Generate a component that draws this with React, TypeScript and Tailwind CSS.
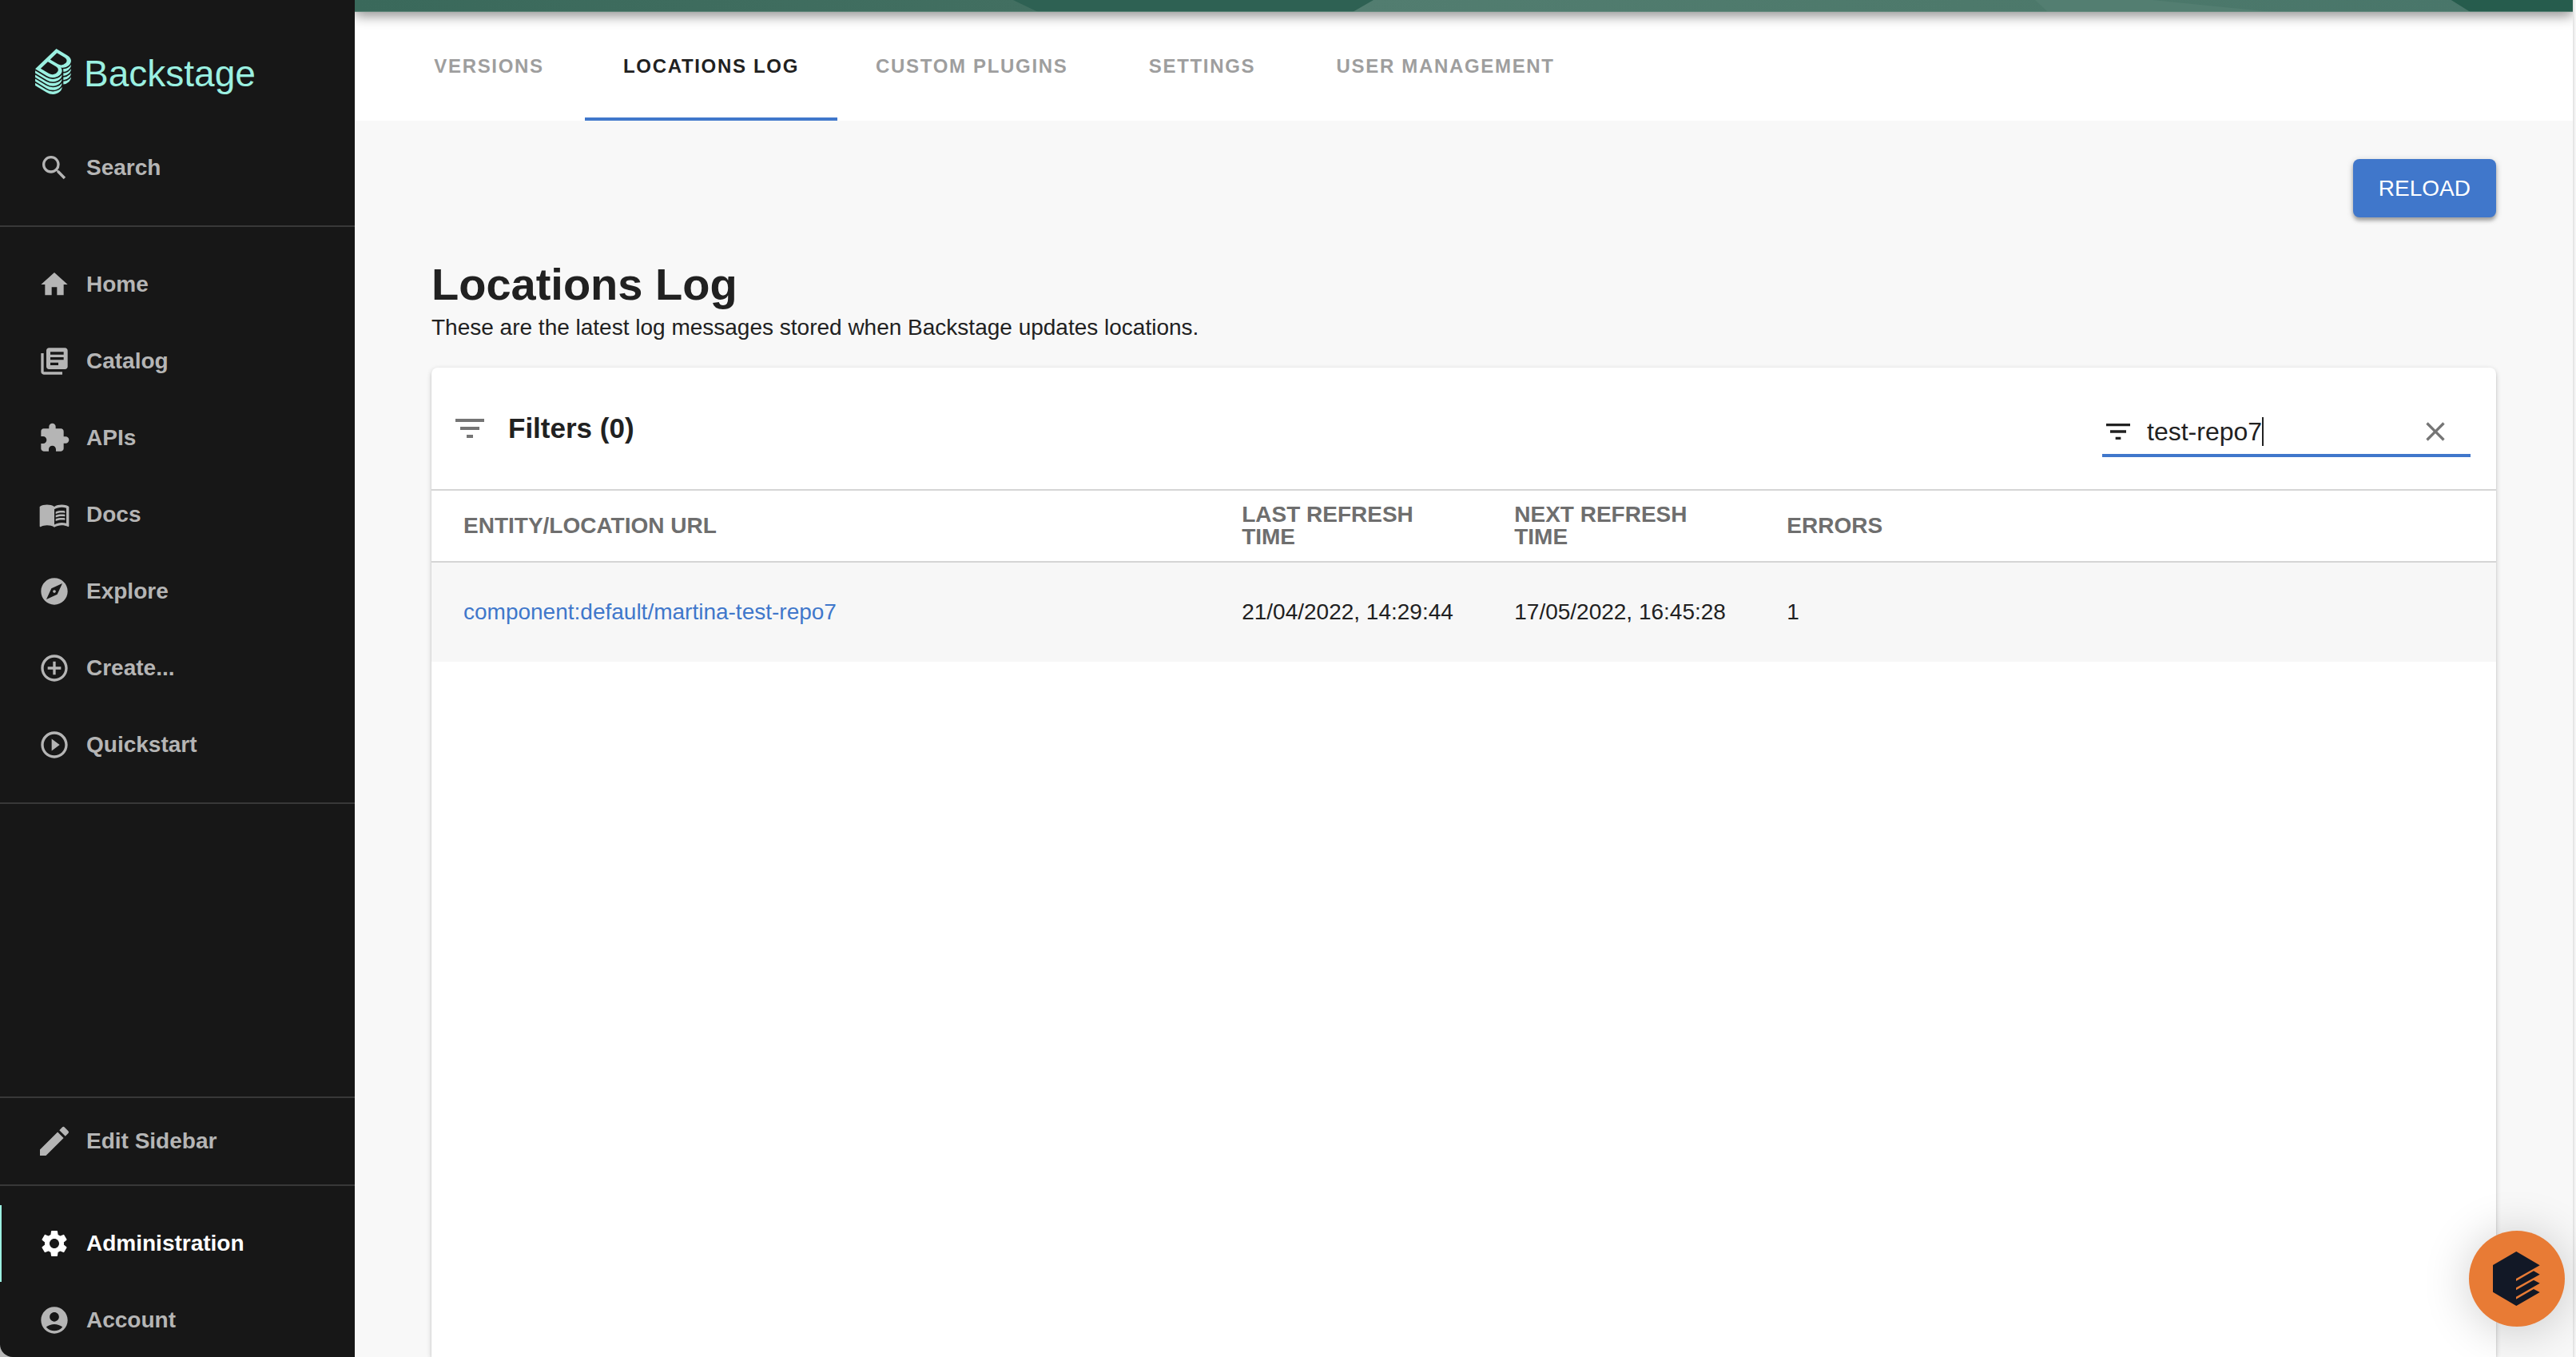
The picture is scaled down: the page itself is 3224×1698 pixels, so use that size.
import type { ReactNode } from "react";
import type { IconType } from "react-icons";
import {
  MdAccountCircle,
  MdAddCircleOutline,
  MdClear,
  MdEdit,
  MdExplore,
  MdExtension,
  MdFilterList,
  MdHome,
  MdLibraryBooks,
  MdMenuBook,
  MdPlayCircleOutline,
  MdSearch,
  MdSettings,
} from "react-icons/md";

const BACKSTAGE_MARK =
  "M303,166.05a80.69,80.69,0,0,0,13.45-10.37c.79-.77,1.55-1.53,2.3-2.3a83.12,83.12,0,0,0,7.93-9.38A63.69,63.69,0,0,0,333,133.23a48.58,48.58,0,0,0,4.35-16.4c1.49-19.39-10-38.67-35.62-54.22L198.56,0,78.3,115.23,0,190.25l108.6,65.91a111.59,111.59,0,0,0,57.76,16.41c24.92,0,48.8-8.8,66.42-25.69,19.16-18.36,25.52-42.12,13.7-61.87a49.22,49.22,0,0,0-6.8-8.87A89.17,89.17,0,0,0,259,178.29h.15a85.08,85.08,0,0,0,31-5.79A80.88,80.88,0,0,0,303,166.05ZM202.45,225.86c-19.32,18.51-50.4,21.23-75.7,5.9L51.61,186.15l67.45-64.64,76.41,46.38C223,184.58,221.49,207.61,202.45,225.86Zm8.93-82.22-70.65-42.89L205.14,39,274.51,81.1c25.94,15.72,29.31,37,10.55,55A60.69,60.69,0,0,1,211.38,143.64Zm29.86,190c-19.57,18.75-46.17,29.09-74.88,29.09a123.73,123.73,0,0,1-64.1-18.2L0,282.52v24.67L108.6,373.1a111.6,111.6,0,0,0,57.76,16.42c24.92,0,48.8-8.81,66.42-25.69,12.88-12.34,20-27.13,19.68-41.49v-1.79A87.27,87.27,0,0,1,241.24,333.68Zm0-39c-19.57,18.75-46.17,29.08-74.88,29.08a123.81,123.81,0,0,1-64.1-18.19L0,243.53v24.68l108.6,65.91a111.6,111.6,0,0,0,57.76,16.42c24.92,0,48.8-8.81,66.42-25.69,12.88-12.34,20-27.13,19.68-41.5v-1.78A87.27,87.27,0,0,1,241.24,294.7Zm0-39c-19.57,18.76-46.17,29.09-74.88,29.09a123.81,123.81,0,0,1-64.1-18.19L0,204.55v24.68l108.6,65.91a111.59,111.59,0,0,0,57.76,16.41c24.92,0,48.8-8.8,66.42-25.68,12.88-12.35,20-27.13,19.68-41.5v-1.82A86.09,86.09,0,0,1,241.24,255.71Zm83.7,25.74a94.15,94.15,0,0,1-60.2,25.86h0V334a81.6,81.6,0,0,0,51.74-22.37c14-13.38,21.14-28.11,21-42.64v-2.19A94.92,94.92,0,0,1,324.94,281.45Zm-83.7,91.21c-19.57,18.76-46.17,29.09-74.88,29.09a123.73,123.73,0,0,1-64.1-18.2L0,321.5v24.68l108.6,65.9a111.6,111.6,0,0,0,57.76,16.42c24.92,0,48.8-8.8,66.42-25.69,12.88-12.34,20-27.13,19.68-41.49v-1.79A86.29,86.29,0,0,1,241.24,372.66ZM327,162.45c-.68.69-1.35,1.38-2.05,2.06a94.37,94.37,0,0,1-10.64,8.65,91.35,91.35,0,0,1-11.6,7,94.53,94.53,0,0,1-26.24,8.71,97.69,97.69,0,0,1-14.16,1.57c.5,1.61.9,3.25,1.25,4.9a53.27,53.27,0,0,1,1.14,12V217h.05a84.41,84.41,0,0,0,25.35-5.55,81,81,0,0,0,26.39-16.82c.8-.77,1.5-1.56,2.26-2.34a82.08,82.08,0,0,0,7.93-9.38A63.76,63.76,0,0,0,333,172.17a48.55,48.55,0,0,0,4.32-16.45c.09-1.23.2-2.47.19-3.7V150q-1.08,1.54-2.25,3.09A96.73,96.73,0,0,1,327,162.45Zm0,77.92c-.69.7-1.31,1.41-2,2.1a94.2,94.2,0,0,1-60.2,25.86h0l0,26.67h0a81.6,81.6,0,0,0,51.74-22.37A73.51,73.51,0,0,0,333,250.13a48.56,48.56,0,0,0,4.32-16.44c.09-1.24.2-2.47.19-3.71v-2.19c-.74,1.07-1.46,2.15-2.27,3.21A95.68,95.68,0,0,1,327,240.37Zm0-39c-.69.7-1.31,1.41-2,2.1a93.18,93.18,0,0,1-10.63,8.65,91.63,91.63,0,0,1-11.63,7,95.47,95.47,0,0,1-37.94,10.18h0V256h0a81.65,81.65,0,0,0,51.74-22.37c.8-.77,1.5-1.56,2.26-2.34a82.08,82.08,0,0,0,7.93-9.38A63.76,63.76,0,0,0,333,211.15a48.56,48.56,0,0,0,4.32-16.44c.09-1.24.2-2.48.19-3.71v-2.2c-.74,1.08-1.46,2.16-2.27,3.22A95.68,95.68,0,0,1,327,201.39Z";

type NavItem = { label: string; icon: IconType; active?: boolean; large?: boolean };

const MAIN_NAV: NavItem[] = [
  { label: "Home", icon: MdHome },
  { label: "Catalog", icon: MdLibraryBooks },
  { label: "APIs", icon: MdExtension },
  { label: "Docs", icon: MdMenuBook },
  { label: "Explore", icon: MdExplore },
  { label: "Create...", icon: MdAddCircleOutline },
  { label: "Quickstart", icon: MdPlayCircleOutline },
];

const FOOTER_NAV: NavItem[] = [
  { label: "Administration", icon: MdSettings, active: true },
  { label: "Account", icon: MdAccountCircle },
];

const TABS = ["Versions", "Locations Log", "Custom Plugins", "Settings", "User Management"];

const ROWS = [
  {
    entity: "component:default/martina-test-repo7",
    last: "21/04/2022, 14:29:44",
    next: "17/05/2022, 16:45:28",
    errors: 1,
  },
];

function SidebarLink({ label, icon: Icon, active, large }: NavItem) {
  return (
    <a
      href="#"
      aria-current={active ? "page" : undefined}
      className={`relative flex h-24 shrink-0 items-center text-[28px] font-bold leading-[34px] ${
        active ? "text-white" : "text-[#b5b5b5]"
      }`}
    >
      {active && <span className="absolute inset-y-0 left-0 w-0.5 bg-[#9bf0e1]" />}
      <span className="flex w-[108px] shrink-0 justify-center pl-7">
        <Icon className={`shrink-0 ${large ? "size-12" : "size-10"}`} />
      </span>
      {label}
    </a>
  );
}

function Divider() {
  return <hr className="shrink-0 border-t-2 border-[#383838]" />;
}

function Sidebar() {
  return (
    <aside className="flex h-full w-[444px] shrink-0 flex-col overflow-hidden rounded-bl-2xl bg-[#171717]">
      <a href="#" className="flex h-[162px] shrink-0 items-start gap-4 pl-11 pt-[61px] text-[#9bf0e1]">
        <svg viewBox="0 0 337.46 428.5" className="h-[57px] w-[45px]" fill="currentColor" aria-hidden="true">
          <path d={BACKSTAGE_MARK} />
        </svg>
        <span className="text-[46px] leading-[62px]">Backstage</span>
      </a>
      <SidebarLink label="Search" icon={MdSearch} />
      <div className="h-6 shrink-0" />
      <Divider />
      <nav className="flex shrink-0 flex-col py-6" aria-label="Main">
        {MAIN_NAV.map((item) => (
          <SidebarLink key={item.label} {...item} />
        ))}
      </nav>
      <Divider />
      <div className="grow" />
      <Divider />
      <div className="flex shrink-0 flex-col py-1.5">
        <SidebarLink label="Edit Sidebar" icon={MdEdit} large />
      </div>
      <Divider />
      <nav className="-mb-0.5 flex shrink-0 flex-col pt-6" aria-label="Account">
        {FOOTER_NAV.map((item) => (
          <SidebarLink key={item.label} {...item} />
        ))}
      </nav>
    </aside>
  );
}

function HeaderBanner() {
  return (
    <header className="relative z-10 h-[15px] shrink-0 shadow-[0_4px_16px_rgba(0,0,0,0.5)]">
      <svg viewBox="0 0 2776 15" preserveAspectRatio="none" className="block h-full w-full" aria-hidden="true">
        <defs>
          <linearGradient id="banner-left" x1="0" x2="1">
            <stop offset="0" stopColor="#3a695b" />
            <stop offset="1" stopColor="#426f61" />
          </linearGradient>
          <linearGradient id="banner-right" x1="0" x2="1">
            <stop offset="0" stopColor="#527d70" />
            <stop offset="0.55" stopColor="#4d796b" />
            <stop offset="1" stopColor="#49766a" />
          </linearGradient>
        </defs>
        <rect width="2776" height="15" fill="#2e6153" />
        <path d="M0 0H824L855 15H0Z" fill="url(#banner-left)" />
        <path d="M1275 0H2624L2648 15H1249Z" fill="url(#banner-right)" />
        <path d="M2103 0H2250L2400 15H2119Z" fill="#537e71" />
        <path d="M2624 0H2776V15H2648Z" fill="#265c4d" />
        <rect y="14" width="2776" height="1" fill="#6f9186" fillOpacity="0.7" />
      </svg>
    </header>
  );
}

function HeaderTabs() {
  return (
    <div role="tablist" aria-label="Administration sections" className="flex h-[136px] shrink-0 bg-white pl-12">
      {TABS.map((tab) => {
        const selected = tab === "Locations Log";
        return (
          <button
            key={tab}
            type="button"
            role="tab"
            aria-selected={selected}
            className={`flex min-w-[240px] items-center justify-center border-y-4 border-t-transparent px-12 text-2xl font-bold uppercase tracking-[0.07em] ${
              selected ? "border-b-[#4077cb] text-[#212121]" : "border-b-transparent text-[#9e9e9e]"
            }`}
          >
            {tab}
          </button>
        );
      })}
    </div>
  );
}

function HeadCell({ className, children }: { className: string; children: ReactNode }) {
  return (
    <th scope="col" className={`py-4 pl-10 pr-10 text-left text-[28px] font-bold uppercase leading-7 text-[#6e6e6e] ${className}`}>
      {children}
    </th>
  );
}

function LocationsTable() {
  return (
    <section className="flex grow flex-col overflow-hidden rounded-t-lg bg-white shadow-[0_2px_6px_rgba(0,0,0,0.2),0_2px_2px_rgba(0,0,0,0.12)]">
      <div className="flex h-[152px] shrink-0 items-center justify-between pr-8">
        <div className="flex items-center pl-3">
          <button type="button" aria-label="Filter list" className="p-3 text-[#757575]">
            <MdFilterList className="size-12" />
          </button>
          <h2 className="pl-3 text-[35px] font-bold leading-[42px] text-[#212121]">Filters (0)</h2>
        </div>
        <div className="mt-3 flex h-[60px] w-[461px] items-center border-b-4 border-[#4077cb] text-[#212121]">
          <MdFilterList className="size-10 shrink-0" />
          <div className="flex grow items-center pl-4">
            <input
              type="text"
              aria-label="Search"
              defaultValue="test-repo7"
              className="field-sizing-content text-[32px] leading-9 caret-transparent outline-none"
            />
            <span className="h-9 w-0.5 bg-[#212121]" />
          </div>
          <button type="button" aria-label="Clear search" className="px-6 text-[#757575]">
            <MdClear className="size-10" />
          </button>
        </div>
      </div>
      <table className="w-full table-fixed border-collapse text-[28px] leading-8 text-[#212121]">
        <thead>
          <tr className="h-[90px] border-y-2 border-[#d5d5d5]">
            <HeadCell className="w-[37.7%]">Entity/Location URL</HeadCell>
            <HeadCell className="w-[13.2%]">Last Refresh Time</HeadCell>
            <HeadCell className="w-[13.2%]">Next Refresh Time</HeadCell>
            <HeadCell className="">Errors</HeadCell>
          </tr>
        </thead>
        <tbody>
          {ROWS.map((row) => (
            <tr key={row.entity} className="h-[125px] bg-[#f7f7f7]">
              <td className="pl-10">
                <a href="#" className="text-[#4077cb]">
                  {row.entity}
                </a>
              </td>
              <td className="whitespace-nowrap pl-10">{row.last}</td>
              <td className="whitespace-nowrap pl-10">{row.next}</td>
              <td className="pl-10">{row.errors}</td>
            </tr>
          ))}
        </tbody>
      </table>
    </section>
  );
}

function HelpButton() {
  return (
    <button
      type="button"
      aria-label="Open help"
      className="fixed bottom-[38px] right-3.5 z-20 size-[120px] rounded-full bg-[#e87b35] shadow-[0_4px_60px_rgba(0,0,0,0.2)]"
    >
      <svg viewBox="0 0 120 120" className="size-full" fill="#121826" aria-hidden="true">
        <path d="M59.3 26L88.7 43.3L59 60V63L81 50.3L88.7 54.7L59 71.3V74.3L81 61.7L88.7 65.7L59 82.7V85.7L81 73L88.7 77L59.3 94L30 76.7V43Z" />
      </svg>
    </button>
  );
}

export default function App() {
  return (
    <div className="flex h-screen overflow-hidden bg-[#b8b8b8] font-['Liberation_Sans',Arial,sans-serif]">
      <Sidebar />
      <div className="flex min-w-0 grow flex-col overflow-hidden border-r-2 border-[#e6e6e6] bg-[#f8f8f8]">
        <HeaderBanner />
        <HeaderTabs />
        <main className="flex grow flex-col px-24 pt-12">
          <div className="flex justify-end">
            <button
              type="button"
              className="h-[73px] rounded-lg bg-[#4077cb] px-8 text-[28px] uppercase leading-8 text-white shadow-[0_4px_4px_rgba(0,0,0,0.25),0_2px_8px_rgba(0,0,0,0.2)]"
            >
              Reload
            </button>
          </div>
          <h1 className="mt-12 text-[56px] font-bold leading-[72px] text-[#212121]">Locations Log</h1>
          <p className="mb-8 text-[28px] leading-9 text-[#212121]">
            These are the latest log messages stored when Backstage updates locations.
          </p>
          <LocationsTable />
        </main>
      </div>
      <div className="w-0.5 shrink-0 bg-[#f5f5f5]" />
      <HelpButton />
    </div>
  );
}
